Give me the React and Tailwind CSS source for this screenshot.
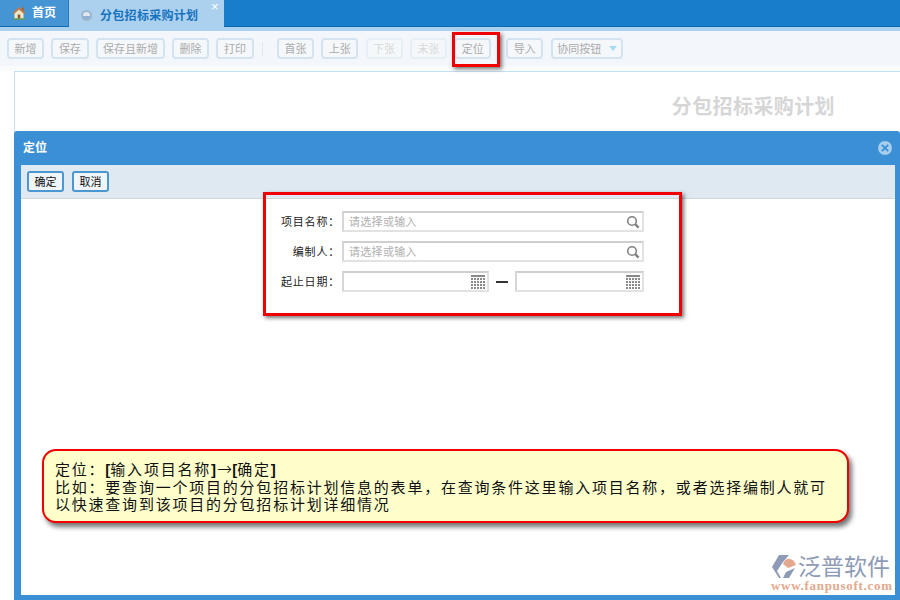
import React from 'react';

const FONT = { fontFamily: '"Liberation Sans", "Noto Sans CJK SC", sans-serif' };

const HomeIcon = () => (
    <svg width="14" height="14" viewBox="0 0 14 14">
        <path d="M0.5 7 L7 1 L13.5 7 L12 8 L7 3.5 L2 8 Z" fill="#c9793a" />
        <rect x="10" y="1.5" width="2" height="3" fill="#a8642f" />
        <path d="M2.5 7.5 L7 3.8 L11.5 7.5 V12.5 H2.5 Z" fill="#f2e6c9" />
        <rect x="5.7" y="8.5" width="2.6" height="4" fill="#8a5a2c" />
        <rect x="1" y="12.5" width="12" height="1.2" fill="#6a9c3c" />
    </svg>
);

const SearchIcon = () => (
    <svg width="14" height="14" viewBox="0 0 14 14" fill="none" stroke="#808080">
        <circle cx="6" cy="6" r="4.3" strokeWidth="1.6" />
        <path d="M9.2 9.2 L12.6 12.6" strokeWidth="2.4" />
    </svg>
);

const CalendarIcon = () => (
    <svg width="14" height="14" viewBox="0 0 14 14" fill="#8a8a8a">
        <rect x="0" y="0" width="14" height="2" />
        {[3, 6, 9, 12].map((y) =>
            [0, 3, 6, 9, 12].map((x) => (
                <rect key={`${x}-${y}`} x={x} y={y} width="2" height="2" />
            ))
        )}
    </svg>
);

const ToolButton = ({ label, width, dim, arrow }) => (
    <div
        className={`h-[21px] flex items-center justify-center gap-2 rounded-[4px] border-2 bg-[#f5f8fb] text-[11px] ${
            dim ? 'border-[#e6eff6] text-[#d8d8d8]' : 'border-[#d3e3f0] text-[#ababab]'
        }`}
        style={{ width }}
    >
        <span className="pt-px">{label}</span>
        {arrow && (
            <span className="w-0 h-0 border-x-[4px] border-x-transparent border-t-[5px] border-t-[#a6dcf5]" />
        )}
    </div>
);

const FormRow = ({ label, children }) => (
    <div className="flex items-center h-[21px]">
        <div className="w-[82px] mr-[2px] pt-px text-right text-[11px] tracking-[0.8px] text-[#222] whitespace-nowrap">{label}：</div>
        <div className="flex items-center">{children}</div>
    </div>
);

const Field = ({ width, placeholder, icon }) => (
    <div
        className="h-[21px] flex items-center justify-between border-2 border-t-[#cfcfcf] border-l-[#d6d6d6] border-r-[#e2e2e2] border-b-[#e2e2e2] bg-white pl-[5px] pr-[2px] text-[11px] tracking-[0.3px] text-[#b0b0b0]"
        style={{ width }}
    >
        <span className="pt-px">{placeholder}</span>
        {icon}
    </div>
);

const App = () => {
    return (
        <div className="relative w-[900px] h-[600px] overflow-hidden bg-white" style={FONT}>
            {/* top tabs */}
            <div className="h-[27px] flex bg-[#187dca] border-b border-[#1169b0]">
                <div className="w-[69px] h-[26px] flex items-center gap-[6px] pl-[12px] bg-[#4594d3] border-r border-[#2a78bb] text-xs font-bold text-white">
                    <HomeIcon />
                    <span>首页</span>
                </div>
                <div className="relative w-[155px] h-[31px] flex items-center pl-[12px] bg-[#acd1ee] text-xs font-bold tracking-[0.3px] text-[#1673bf] z-10">
                    <span className="w-[11px] h-[11px] rounded-full border-2 border-[#9db6cf] bg-[linear-gradient(#dfe8f2_50%,#8db0d6_50%)]" />
                    <span className="ml-[8px]">分包招标采购计划</span>
                    <span className="absolute right-[5px] top-[-2px] text-[13px] font-normal text-white">×</span>
                </div>
            </div>
            <div className="h-[4px] bg-[#acd1ee]" />

            {/* toolbar */}
            <div className="h-[35px] flex items-center pl-[7px] bg-[#f3f7fb]">
                <div className="flex items-center gap-[7px]">
                    <ToolButton label="新增" width={37} />
                    <ToolButton label="保存" width={38} />
                    <ToolButton label="保存且新增" width={69} />
                    <ToolButton label="删除" width={37} />
                    <ToolButton label="打印" width={38} />
                </div>
                <div className="ml-[8px] mr-[14px] w-px h-[14px] bg-[#e6e6e6]" />
                <div className="flex items-center gap-[7.3px]">
                    <ToolButton label="首张" width={37} />
                    <ToolButton label="上张" width={37} />
                    <ToolButton label="下张" width={37} dim />
                    <ToolButton label="末张" width={37} dim />
                    <ToolButton label="定位" width={37} />
                </div>
                <div className="flex items-center gap-[8px] ml-[15px]">
                    <ToolButton label="导入" width={37} />
                    <ToolButton label="协同按钮" width={72} arrow />
                </div>
            </div>
            <div className="h-[5px] bg-[#fafbfc]" />

            {/* page behind the dialog */}
            <div className="ml-[14px] h-[100px] border-t border-l border-[#c5e0f3] pt-[20px] pr-[65px] text-right text-[20px] font-bold tracking-[0.4px] text-[#d6d6d6]">
                分包招标采购计划
            </div>

            {/* highlight on the locate button */}
            <div className="absolute left-[452px] top-[32px] w-[48px] h-[35px] border-[3px] border-[#f00000] shadow-[2px_2px_4px_rgba(0,0,0,0.55)]" />

            {/* dialog */}
            <div className="absolute left-[14px] top-[131px] w-[886px] h-[469px] flex flex-col rounded-t-[3px] bg-[#3a8fd5] pb-[5px] pl-[7px] pr-[5px]">
                <div className="h-[34px] shrink-0 flex items-center justify-between pl-[2px] text-xs font-bold text-white">
                    <span>定位</span>
                    <span className="w-[14px] h-[14px] mr-[3px] flex items-center justify-center rounded-full bg-[#a5cdec]">
                        <svg width="8" height="8" viewBox="0 0 8 8" stroke="#3a8fd5" strokeWidth="1.8">
                            <path d="M0.8 0.8 L7.2 7.2 M7.2 0.8 L0.8 7.2" />
                        </svg>
                    </span>
                </div>
                <div className="flex-1 flex flex-col bg-white">
                    <div className="h-[34px] shrink-0 flex items-center gap-[8px] pl-[6px] bg-[#dfe9f2] border-b border-[#cfd6dc]">
                        {['确定', '取消'].map((label) => (
                            <div
                                key={label}
                                className="w-[37px] h-[21px] pt-px flex items-center justify-center rounded-[3px] border-2 border-[#4a97d2] bg-[#f0f5f9] text-[11px] text-[#111]"
                            >
                                {label}
                            </div>
                        ))}
                    </div>
                    <div className="flex flex-col gap-[9px] pt-[12px] pl-[237px]">
                        <FormRow label="项目名称">
                            <Field width={302} placeholder="请选择或输入" icon={<SearchIcon />} />
                        </FormRow>
                        <FormRow label="编制人">
                            <Field width={302} placeholder="请选择或输入" icon={<SearchIcon />} />
                        </FormRow>
                        <FormRow label="起止日期">
                            <Field width={147} icon={<CalendarIcon />} />
                            <span className="w-[26px] pt-px flex justify-center">
                                <span className="w-[12px] h-[2px] bg-[#333]" />
                            </span>
                            <Field width={129} icon={<CalendarIcon />} />
                        </FormRow>
                    </div>
                </div>
            </div>

            {/* highlight on the form */}
            <div className="absolute left-[263px] top-[192px] w-[419px] h-[124px] border-[3px] border-[#f00000] shadow-[2px_2px_4px_rgba(0,0,0,0.55)]" />

            {/* note */}
            <div className="absolute left-[42px] top-[449px] w-[807px] h-[74px] pl-[11px] pt-[9px] rounded-[14px] border-2 border-[#f00000] bg-[#ffffcc] text-[15px] leading-[17.5px] tracking-[1.78px] whitespace-nowrap text-[#111] shadow-[3px_4px_5px_rgba(0,0,0,0.55)]">
                <div>
                    定位：<b className="tracking-normal">[</b>输入项目名称<b className="tracking-normal">]</b>
                    <span className="ml-px text-[18px] leading-[17px] font-light tracking-normal" style={{ fontFamily: '"DejaVu Sans", sans-serif' }}>→</span>
                    <b className="tracking-normal">[</b>确定<b className="tracking-normal">]</b>
                </div>
                <div>比如：要查询一个项目的分包招标计划信息的表单，在查询条件这里输入项目名称，或者选择编制人就可</div>
                <div>以快速查询到该项目的分包招标计划详细情况</div>
            </div>

            {/* logo */}
            <div className="absolute left-[771px] top-[554px] w-[122px]">
                <div className="flex items-center">
                    <svg width="26" height="26" viewBox="0 0 26 26">
                        <path d="M8 1 H18 L12 8 L6 17 L10 24 H8 L1 13 Z" fill="#8d9bb6" />
                        <path d="M12 10 C14 3 22 3 25 11 L17 14 Z" fill="#e3a88d" />
                        <path d="M24 14 L18 24 H12 L15 18 Z" fill="#8d9bb6" />
                    </svg>
                    <span className="ml-px text-[23px] leading-[26px] whitespace-nowrap text-[#8d9bb6]">泛普软件</span>
                </div>
                <div className="text-[13px] leading-[12px] font-bold tracking-[0.7px] whitespace-nowrap text-[#e3a88d]" style={{ fontFamily: '"Liberation Serif", serif' }}>
                    www.fanpusoft.com
                </div>
            </div>
        </div>
    );
};

export default App;
